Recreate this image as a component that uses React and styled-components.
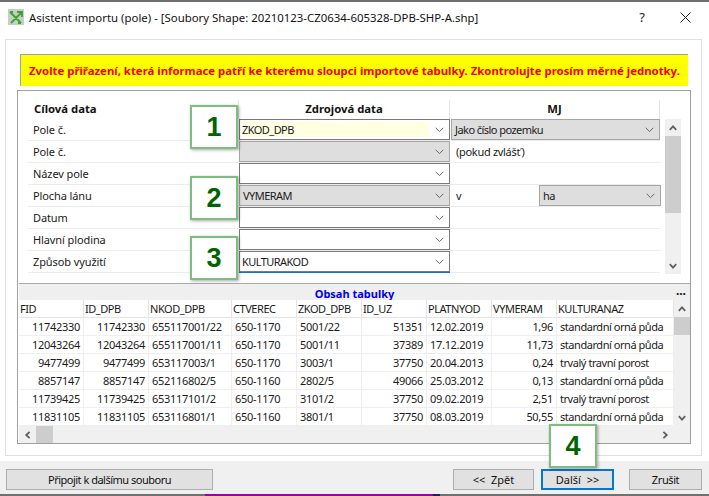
import React from "react";
import styled, { createGlobalStyle } from "styled-components";

const Global = createGlobalStyle`
  html, body { margin: 0; padding: 0; background: #fff; }
  * { box-sizing: border-box; }
`;
const FONT = `"Noto Sans", "DejaVu Sans", sans-serif`;

const Window = styled.div`
  position: relative; width: 709px; height: 496px; overflow: hidden;
  display: flex; flex-direction: column; background: #fff;
  font-family: ${FONT}; font-size: 11px; color: #1a1a1a;
  border-top: 2px solid #707070;
`;
const TitleBar = styled.div`
  height: 37px; flex: none; display: flex; align-items: center; padding: 0 18px 7px 8px;
`;
const TitleText = styled.div`font-size: 11.4px; margin-left: 5px; flex: 1; white-space: nowrap; color: #111;`;
const HelpMark = styled.div`font-size: 13px; margin-right: 35px;`;
const Panel = styled.div`
  margin: 0 7px 0 5px; height: 417px; flex: none; border: 1px solid #e0e0e0;
  padding: 14px 10px 0 11px; display: flex; flex-direction: column;
`;
const Banner = styled.div`
  margin: 0 0 4px 3px; width: 668px; height: 32px; background: #ffff00; color: #f00000; font-weight: 700;
  border-top: 1px solid #a0a0a0; border-left: 1px solid #a0a0a0;
  display: flex; align-items: center; padding-left: 8px; white-space: nowrap; font-size: 11.37px;
`;
const Group = styled.div`
  height: 354px; border: 1px solid #a0a0a0; padding: 0 0 0 1px; display: flex; flex-direction: column;
`;
const FormArea = styled.div`display: flex; padding: 9px 0 0 9px; height: 192px; flex: none;`;
const FormGrid = styled.div`width: 632px; display: flex; flex-direction: column;`;
const HeadRow = styled.div`display: grid; grid-template-columns: 211px 211px 210px; height: 19px;`;
const HeadCell = styled.div`
  font-weight: 700; font-size: 11.3px; line-height: 18px; color: #111;
  text-align: ${p => (p.$left ? "left" : "center")};
  padding-left: ${p => (p.$left ? "6px" : 0)};
  border-right: 1px solid #e4e4e4;
`;
const FormRow = styled.div`display: grid; grid-template-columns: 211px 211px 210px; height: 22px;`;
const LabelCell = styled.div`
  padding-left: 5px; line-height: 21px; border-bottom: 1px solid #ececec; white-space: nowrap; letter-spacing: -0.1px;
`;
const SourceCell = styled.div`border-bottom: 1px solid ${p => (p.$last ? "#0a78d7" : "#ececec")};`;
const UnitCell = styled.div`display: flex; padding-left: 1px; border-bottom: 1px solid #ececec;`;
const UnitText = styled.div`
  padding-left: 5px; line-height: 21px; flex: none; width: ${p => p.$w || "auto"}; white-space: nowrap; letter-spacing: -0.3px;
`;
const Combo = styled.div`
  height: 21px; width: ${p => p.$w || "100%"}; flex: none;
  display: flex; align-items: center; justify-content: space-between;
  background: ${p => (p.$grey ? "#dedede" : "#fff")};
  border: 1px solid ${p => (p.$soft ? "#a6a6a6" : "#7a7a7a")};
  padding: 0 5px 0 ${p => (p.$grey ? "3px" : "2px")};
  white-space: nowrap; line-height: 1; letter-spacing: -0.55px;
`;
const ComboValue = styled.span`
  flex: 1; height: 15px; line-height: 15px; margin-right: 6px;
  background: ${p => (p.$yellow ? "#ffffe1" : "transparent")};
`;
const ChevronSvg = styled.svg`width: 9px; height: 6px; flex: none;`;
const Chevron = () => (
  <ChevronSvg viewBox="0 0 9 6"><path d="M.7.8 4.5 4.6 8.3.8" fill="none" stroke="#666" strokeWidth="1" /></ChevronSvg>
);
const VScroll = styled.div`
  width: 16px; margin: ${p => p.$form ? "19px 0 0 5px" : "0"}; background: #f0f0f0;
  height: ${p => p.$form ? "155px" : "126px"}; display: flex; flex-direction: column; flex: none;
`;
const ScrollBtn = styled.div`
  width: ${p => p.$h ? "17px" : "16px"}; height: 17px; flex: none;
  display: flex; align-items: center; justify-content: center;
`;
const VThumb = styled.div`height: ${p => p.$h}px; background: #cdcdcd; flex: none;`;
const Grow = styled.div`flex: 1;`;
const ArrowSvg = styled.svg`width: 8px; height: 8px;`;
const Arrow = ({ d }) => (
  <ArrowSvg viewBox="0 0 8 8">
    <path d={d} fill="none" stroke="#606060" strokeWidth="1.8" />
  </ArrowSvg>
);
const UP = "M.8 5.8 4 2.4 7.2 5.8";
const DOWN = "M.8 2.2 4 5.6 7.2 2.2";
const LEFT = "M5.6.8 2.2 4 5.6 7.2";
const RIGHT = "M2.4.8 5.8 4 2.4 7.2";

const TableBar = styled.div`
  height: 17px; flex: none; display: flex; align-items: center; justify-content: center;
  position: relative; background: #efefef; border-top: 1px solid #aaa;
  font-weight: 700; color: #0000f0; font-size: 11px; padding-top: 3px; overflow: hidden;
`;
const Ellipsis = styled.span`position: absolute; right: 4px; top: 1px; color: #111; font-weight: 700; font-size: 12px; line-height: 11px;`;
const TableBody = styled.div`display: flex; height: 126px; flex: none;`;
const Table = styled.div`width: 655px; flex: none;`;
const COLS = "65px 65px 83px 65px 65px 65px 65px 65px 117px";
const THead = styled.div`display: grid; grid-template-columns: ${COLS}; height: 18px;`;
const TH = styled.div`
  padding-left: 1px; line-height: 17px; border-right: 1px solid #e4e4e4; border-bottom: 1px solid #e4e4e4;
  white-space: nowrap; overflow: hidden; letter-spacing: -0.45px;
`;
const TRow = styled.div`display: grid; grid-template-columns: ${COLS}; height: 18px;`;
const TD = styled.div`
  padding: 0 3px; line-height: 17px; border-right: 1px solid #efefef; border-bottom: 1px solid #efefef;
  text-align: ${p => (p.$num ? "right" : "left")}; white-space: nowrap; overflow: hidden;
  letter-spacing: ${p => (p.$words ? "-0.45px" : "-0.3px")};
`;
const HScroll = styled.div`height: 17px; flex: none; background: #f0f0f0; display: flex; align-items: center; padding-right: 17px;`;
const HThumb = styled.div`width: 17px; height: 17px; background: #cdcdcd;`;

const Footer = styled.div`
  margin-top: 5px; flex: 1; background: #f0f0f0; display: flex; align-items: flex-start;
  padding: 8px 7px 0 6px;
`;
const Btn = styled.div`
  width: ${p => p.$w}px; height: 21px; margin-left: ${p => p.$ml || 0}px;
  background: #e1e1e1; border: ${p => (p.$focus ? "2px solid #0078d7" : "1px solid #adadad")};
  display: flex; align-items: center; justify-content: center; white-space: pre; color: #111;
  letter-spacing: ${p => p.$ls || 0}px;
`;
const BottomEdge = styled.div`height: 2px; flex: none; background: #707070; display: flex;`;
const EdgePurple = styled.div`width: 228px; margin-left: 205px; background: #a000a0;`;
const EdgeNavy = styled.div`width: 7px; background: #1f1f60;`;

const Badge = styled.div`
  position: absolute; left: ${p => p.$x}px; top: ${p => p.$y}px; width: 48px; height: 44px;
  background: #fff; border: 2px solid #7ebc80; box-shadow: 1px 1px 3px rgba(0,0,0,.35);
  display: flex; align-items: center; justify-content: center;
  font-family: "Liberation Sans", sans-serif; font-weight: 700; font-size: 27px; color: #006400;
`;
const IconSvg = styled.svg`width: 16px; height: 16px; flex: none;`;

const rows = [
  { label: "Pole č.", src: "ZKOD_DPB", yellow: true, unit: "Jako číslo pozemku", unitType: "combo" },
  { label: "Pole č.", src: "", grey: true, soft: true, unit: "(pokud zvlášť)", unitType: "text" },
  { label: "Název pole", src: "" },
  { label: "Plocha lánu", src: "VYMERAM", grey: true, soft: true, unitType: "ha" },
  { label: "Datum", src: "" },
  { label: "Hlavní plodina", src: "" },
  { label: "Způsob využití", src: "KULTURAKOD", last: true },
];
const cols = ["FID", "ID_DPB", "NKOD_DPB", "CTVEREC", "ZKOD_DPB", "ID_UZ", "PLATNYOD", "VYMERAM", "KULTURANAZ"];
const numeric = [true, true, false, false, false, true, false, true, false];
const data = [
  ["11742330", "11742330", "655117001/22", "650-1170", "5001/22", "51351", "12.02.2019", "1,96", "standardní orná půda"],
  ["12043264", "12043264", "655117001/11", "650-1170", "5001/11", "37389", "17.12.2019", "11,73", "standardní orná půda"],
  ["9477499", "9477499", "653117003/1", "650-1170", "3003/1", "37750", "20.04.2013", "0,24", "trvalý travní porost"],
  ["8857147", "8857147", "652116802/5", "650-1160", "2802/5", "49066", "25.03.2012", "0,13", "standardní orná půda"],
  ["11739425", "11739425", "653117101/2", "650-1170", "3101/2", "37750", "09.02.2019", "2,51", "trvalý travní porost"],
  ["11831105", "11831105", "653116801/1", "650-1160", "3801/1", "37750", "08.03.2019", "50,55", "standardní orná půda"],
];

export default function App() {
  return (
    <Window>
      <Global />
      <TitleBar>
        <IconSvg viewBox="0 0 16 16">
          <rect width="16" height="16" fill="#c6cfc6" />
          <path d="M2 3 13 14M3 14 14 3M9 3h5v5M2 3h3M13 14h-3" fill="none" stroke="#3aa52e" strokeWidth="1.8" />
        </IconSvg>
        <TitleText>Asistent importu (pole) - [Soubory Shape: 20210123-CZ0634-605328-DPB-SHP-A.shp]</TitleText>
        <HelpMark>?</HelpMark>
        <svg width="11" height="11" viewBox="0 0 11 11"><path d="M.5.5 10.5 10.5M10.5.5 .5 10.5" stroke="#222" strokeWidth="1" fill="none" /></svg>
      </TitleBar>
      <Panel>
        <Banner>Zvolte přiřazení, která informace patří ke kterému sloupci importové tabulky. Zkontrolujte prosím měrné jednotky.</Banner>
        <Group>
          <FormArea>
            <FormGrid>
              <HeadRow>
                <HeadCell $left>Cílová data</HeadCell>
                <HeadCell>Zdrojová data</HeadCell>
                <HeadCell>MJ</HeadCell>
              </HeadRow>
              {rows.map((r, i) => (
                <FormRow key={i}>
                  <LabelCell>{r.label}</LabelCell>
                  <SourceCell $last={r.last}>
                    <Combo $grey={r.grey} $soft={r.soft}>
                      <ComboValue $yellow={r.yellow}>{r.src}</ComboValue>
                      <Chevron />
                    </Combo>
                  </SourceCell>
                  <UnitCell>
                    {r.unitType === "combo" && (
                      <Combo $grey $soft><ComboValue>{r.unit}</ComboValue><Chevron /></Combo>
                    )}
                    {r.unitType === "text" && <UnitText>{r.unit}</UnitText>}
                    {r.unitType === "ha" && (
                      <>
                        <UnitText $w="88px">v</UnitText>
                        <Combo $grey $soft $w="122px"><ComboValue>ha</ComboValue><Chevron /></Combo>
                      </>
                    )}
                  </UnitCell>
                </FormRow>
              ))}
            </FormGrid>
            <VScroll $form>
              <ScrollBtn><Arrow d={UP} /></ScrollBtn>
              <VThumb $h={77} />
              <Grow />
              <ScrollBtn><Arrow d={DOWN} /></ScrollBtn>
            </VScroll>
          </FormArea>
          <TableBar>Obsah tabulky<Ellipsis>...</Ellipsis></TableBar>
          <TableBody>
            <Table>
              <THead>{cols.map(c => <TH key={c}>{c}</TH>)}</THead>
              {data.map((row, i) => (
                <TRow key={i}>
                  {row.map((v, j) => <TD key={j} $num={numeric[j]} $words={j === 8}>{v}</TD>)}
                </TRow>
              ))}
            </Table>
            <VScroll>
              <ScrollBtn><Arrow d={UP} /></ScrollBtn>
              <VThumb $h={18} />
              <Grow />
              <ScrollBtn><Arrow d={DOWN} /></ScrollBtn>
            </VScroll>
          </TableBody>
          <HScroll>
            <ScrollBtn $h><Arrow d={LEFT} /></ScrollBtn>
            <HThumb />
            <Grow />
            <ScrollBtn $h><Arrow d={RIGHT} /></ScrollBtn>
          </HScroll>
        </Group>
      </Panel>
      <Footer>
        <Btn $w={207} $ls={-0.5}>Připojit k dalšímu souboru</Btn>
        <Grow />
        <Btn $w={81}>{"<<  Zpět"}</Btn>
        <Btn $w={73} $ml={7} $focus>{"Další  >>"}</Btn>
        <Btn $w={73} $ml={15} $ls={-0.4}>Zrušit</Btn>
      </Footer>
      <BottomEdge><EdgePurple /><EdgeNavy /></BottomEdge>
      <Badge $x={190} $y={103}>1</Badge>
      <Badge $x={190} $y={174}>2</Badge>
      <Badge $x={190} $y={234}>3</Badge>
      <Badge $x={549} $y={422}>4</Badge>
    </Window>
  );
}
